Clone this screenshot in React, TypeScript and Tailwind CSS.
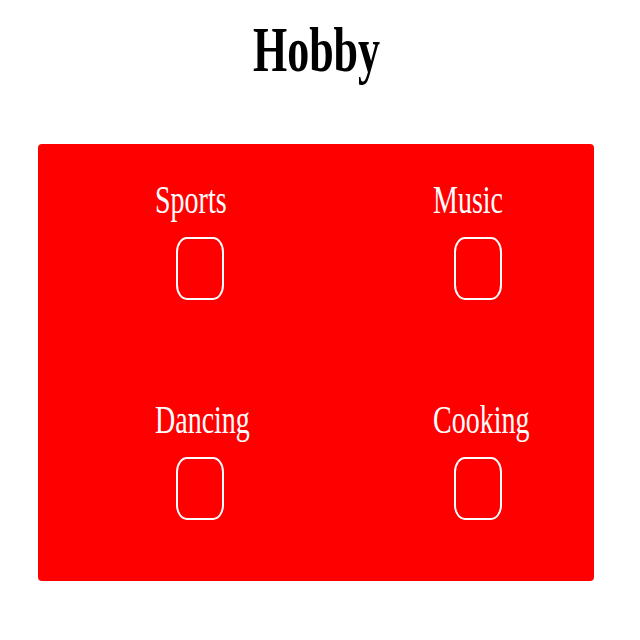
const hobbies = ["Sports", "Music", "Dancing", "Cooking"];

const HobbyItem = ({ label }: { label: string }) => {
  return (
    <label className="flex h-[220px] flex-col">
      <span className="block h-[28px] pl-[117px] text-[28px] leading-[28px] text-white">
        <span className="inline-block origin-center scale-y-[1.42]">{label}</span>
      </span>
      <input type="checkbox" className="sr-only" />
      <span className="ml-[138px] mt-[23px] block h-[63px] w-[48px] rounded-[11px/15px] border-2 border-white" />
    </label>
  );
};

const App = () => {
  return (
    <div className="h-[640px] w-[640px] bg-white pt-[29px] font-['Liberation_Serif',serif]">
      <h1 className="h-[44px] text-center text-[44px] font-bold leading-[44px] text-black">
        <span className="ml-[-7px] inline-block origin-center scale-y-[1.45]">Hobby</span>
      </h1>
      <div className="ml-[38px] mt-[71px] grid h-[437px] w-[556px] grid-cols-2 rounded-[4px] bg-[#ff0000] pt-[42px]">
        {hobbies.map((hobby) => (
          <HobbyItem key={hobby} label={hobby} />
        ))}
      </div>
    </div>
  );
};

export default App;
